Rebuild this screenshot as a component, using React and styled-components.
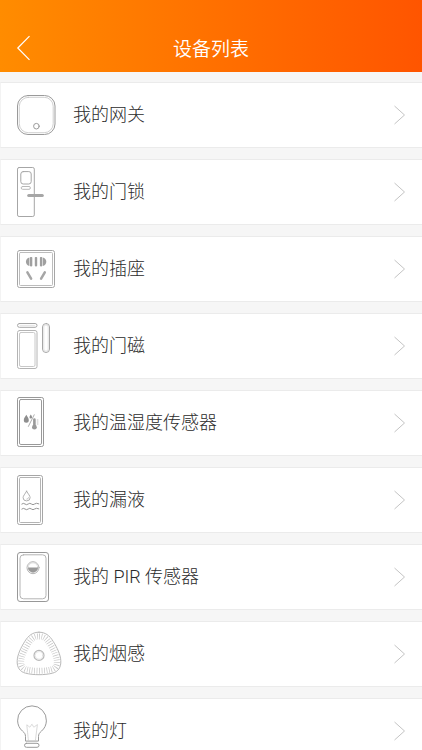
import React from "react";
import styled, { createGlobalStyle } from "styled-components";

const GlobalStyle = createGlobalStyle`
  * {
    box-sizing: border-box;
  }
  html {
    scrollbar-width: none;
  }
  body {
    margin: 0;
    background: #f6f6f6;
    font-family: "Noto Sans CJK SC", sans-serif;
    font-weight: 300;
  }
`;

const Header = styled.header`
  display: grid;
  grid-template-columns: 48px 1fr 48px;
  align-items: center;
  height: 72px;
  padding-top: 24px;
  background: linear-gradient(90deg, #ff8c00, #ff5500);
  color: #fff;
`;

const BackButton = styled.button`
  display: flex;
  padding: 0 0 0 16px;
  border: 0;
  background: none;
  color: inherit;
  cursor: pointer;
`;

const Title = styled.h1`
  margin: 0;
  font-size: 19px;
  line-height: 24px;
  font-weight: 350;
  text-align: center;
`;

const DeviceList = styled.ul`
  display: flex;
  flex-direction: column;
  gap: 11px;
  margin: 0;
  padding: 10px 0;
  list-style: none;
`;

const DeviceLink = styled.a`
  display: flex;
  align-items: center;
  height: 66px;
  padding: 0 16px 0 15px;
  border: 1px solid #ebebeb;
  border-right: 0;
  border-left-color: #f3f3f3;
  background: #fff;
  color: #2b2b2b;
  text-decoration: none;
`;

const DeviceName = styled.span`
  flex: 1;
  margin-left: 9px;
  font-family: Roboto, "Noto Sans CJK SC", sans-serif;
  font-size: 18px;
  line-height: 24px;
`;

const DeviceIcon = styled.svg`
  flex: none;
  overflow: visible;
  fill: none;
  stroke: ${({ $tone }) => $tone || "#a6a6a6"};
  stroke-width: 1;
  stroke-linecap: round;
  stroke-linejoin: round;
`;

const Arrow = styled.svg`
  flex: none;
  fill: none;
  stroke: ${({ $color }) => $color};
  stroke-width: ${({ $weight }) => $weight};
`;

const devices = [
  {
    id: "gateway",
    name: "我的网关",
    tone: "#9a9a9a",
    icon: (
      <>
        <rect x="1.5" y="5.5" width="37.5" height="39" rx="10.5" />
        <rect x="3.3" y="7.3" width="33.9" height="35.4" rx="9" stroke="#c4c4c4" strokeWidth="0.8" />
        <circle cx="20.4" cy="36.2" r="2.8" />
      </>
    ),
  },
  {
    id: "lock",
    name: "我的门锁",
    icon: (
      <>
        <rect x="1.5" y="0.5" width="16.8" height="49" rx="1.6" />
        <rect x="4.8" y="4.6" width="10.4" height="12.4" rx="2.4" />
        <rect x="5.2" y="19.5" width="9.2" height="2.8" rx="1.4" stroke="#b8b8b8" />
        <path d="M12.7 28.5H26.3" strokeWidth="3" />
      </>
    ),
  },
  {
    id: "socket",
    name: "我的插座",
    icon: (
      <>
        <rect x="1.5" y="6.5" width="37" height="37" rx="2" />
        <rect x="3.5" y="8.500" width="33" height="33" rx="1" stroke="#bcbcbc" />
        <g fill="#a0a0a0" stroke="none">
          <path d="M13.400 13.600v8.400c-2-.4-3.500-2.200-3.500-4.200s1.500-3.800 3.500-4.200z" />
          <rect x="13.900" y="13" width="2.400" height="9.400" rx="0.800" />
          <rect x="18.800" y="13" width="2.400" height="9.400" rx="0.800" />
          <rect x="23.900" y="13" width="2.400" height="9.400" rx="0.800" />
          <path d="M26.800 13.600v8.400c2-.4 3.500-2.200 3.500-4.200s-1.500-3.800-3.500-4.200z" />
        </g>
        <path d="M11.400 28.400l3.700 6.300M28.800 28.400l-3.700 6.300" strokeWidth="2.500" />
      </>
    ),
  },
  {
    id: "door-sensor",
    name: "我的门磁",
    icon: (
      <>
        <rect x="1.5" y="2.5" width="19.5" height="3.8" rx="1.9" />
        <path d="M4 4.4h14.5" stroke="#dedede" strokeWidth="0.8" />
        <rect x="1.5" y="9.5" width="19.5" height="38" rx="2" stroke="#b4b4b4" />
        <rect x="3.5" y="11.5" width="15.5" height="34" rx="1.5" stroke="#c8c8c8" />
        <rect x="26.5" y="2.5" width="7" height="29" rx="3.5" />
        <rect x="27.8" y="3.8" width="4.4" height="26.4" rx="2.2" stroke="#d6d6d6" strokeWidth="0.7" />
      </>
    ),
  },
  {
    id: "climate-sensor",
    name: "我的温湿度传感器",
    tone: "#999",
    icon: (
      <>
        <rect x="1.5" y="-0.5" width="26" height="49" rx="1.8" />
        <rect x="3.5" y="1.5" width="22" height="45" rx="1.4" />
        <path d="M10.3 16.8c1.2 2.1 2.5 3.6 2.5 5.4a2.5 2.5 0 0 1-5 0c0-1.8 1.3-3.3 2.5-5.4z" fill="#8e8e8e" stroke="none" />
        <path d="M14.8 16.4c.7 1.1 1.3 1.9 1.3 2.8a1.3 1.3 0 0 1-2.6 0c0-.9.6-1.7 1.3-2.8z" fill="#8e8e8e" stroke="none" />
        <path d="M18.2 16.8L12.4 28.4" strokeWidth="0.8" />
        <path d="M18.4 21.500v7" strokeWidth="2.600" />
        <circle cx="18.4" cy="29.2" r="2.4" fill="#999" stroke="none" />
        <path d="M21.2 22h.8M21.2 24h.8M21.2 26h.8" strokeWidth="0.6" />
      </>
    ),
  },
  {
    id: "leak-sensor",
    name: "我的漏液",
    icon: (
      <>
        <rect x="1.5" y="0.5" width="25" height="49" rx="2" />
        <rect x="3.5" y="2.5" width="21" height="45" rx="1" stroke="#b4b4b4" />
        <path d="M10.6 16.2c1.7 3 3.5 4.6 3.5 6.5a3.5 3.2 0 0 1-7 0c0-1.9 1.8-3.5 3.5-6.5z" strokeWidth="0.9" />
        <path d="M10.8 24.2a1.8 1.8 0 0 0 1.8-1.6" strokeWidth="0.6" />
        <path d="M5.800 29q1.600-1.400 3.200 0t3.200 0t3.200 0t3.200 0t4.200-.2" stroke="#969696" />
        <path d="M5.800 34q1.600-1.400 3.200 0t3.200 0t3.200 0t3.200 0t4.200-.2" stroke="#969696" />
      </>
    ),
  },
  {
    id: "pir-sensor",
    name: "我的 PIR 传感器",
    tone: "#989898",
    icon: (
      <>
        <rect x="1.5" y="0.5" width="31" height="49" rx="2.6" />
        <rect x="4" y="2.8" width="26" height="44" rx="3.4" stroke="#b4b4b4" />
        <circle cx="17" cy="15.7" r="6" stroke="#ababab" strokeWidth="0.9" />
        <circle cx="17" cy="15.7" r="4.9" stroke="#d0d0d0" strokeWidth="0.7" />
        <path d="M12 15.4h10a5 5 0 0 1-10 0z" fill="#999" stroke="none" />
      </>
    ),
  },
  {
    id: "smoke-sensor",
    name: "我的烟感",
    tone: "#b8b8b8",
    icon: (
      <>
        <path
          d="M23 7.400c5.200 0 7.800 2.500 10.800 7.400 3.700 6 6.400 11.400 7 16.800.5 5-1.400 7.800-5.500 8.900-7.200 1.800-17.400 1.800-24.600 0-4.100-1.100-6-3.900-5.500-8.900.6-5.400 3.300-10.800 7-16.800C15.200 9.900 17.800 7.400 23 7.400z"
          stroke="#c4c4c4"
          strokeWidth="6"
          strokeLinecap="butt"
          strokeDasharray="0.7 1.700"
        />
        <path d="M23 3.200c6.500 0 10.500 3.300 14.200 9.200 4 6.400 7.200 13 7.600 19.200.4 6.800-2.700 11.200-8.400 12.600-8 2-18.800 2-26.800 0-5.700-1.400-8.800-5.800-8.400-12.600.4-6.200 3.600-12.800 7.600-19.200C12.500 6.500 16.500 3.200 23 3.200z" />
        <circle cx="23" cy="26.400" r="5" strokeWidth="1.200" />
        <circle cx="23" cy="26.400" r="3.800" stroke="#d8d8d8" strokeWidth="0.600" />
      </>
    ),
  },
  {
    id: "light",
    name: "我的灯",
    tone: "#9a9a9a",
    icon: (
      <>
        <path d="M9.500 34.700v-4.200c0-2.400-1-3.700-3-5.400A14.400 14.400 0 1 1 25.500 25.100c-2 1.700-3 3-3 5.400v4.200z" />
        <rect x="8.500" y="37.300" width="14.500" height="4" rx="2" />
        <path d="M12.400 34.400l-1.600-15.600 3 2.400 2.200-3 1.800 3 3.600-2.600-2 15.800" stroke="#c8c8c8" strokeWidth="0.700" strokeDasharray="1.200 0.800" />
      </>
    ),
  },
];

function DeviceItem({ name, icon, tone }) {
  return (
    <li>
      <DeviceLink href="#">
        <DeviceIcon width="48" height="50" viewBox="0 0 48 50" $tone={tone} aria-hidden="true">
          {icon}
        </DeviceIcon>
        <DeviceName>{name}</DeviceName>
        <Arrow width="12" height="20" viewBox="0 0 12 20" $color="#c4c4c4" $weight={1} aria-hidden="true">
          <path d="M0.500 1L10.500 10L0.500 19" />
        </Arrow>
      </DeviceLink>
    </li>
  );
}

function App() {
  return (
    <>
      <GlobalStyle />
      <Header>
        <BackButton type="button" aria-label="返回">
          <Arrow width="14" height="26" viewBox="0 0 14 26" $color="#fff" $weight={1.2} aria-hidden="true">
            <path d="M13.500 1.200L1.800 13L13.500 24.800" />
          </Arrow>
        </BackButton>
        <Title>设备列表</Title>
      </Header>
      <main>
        <DeviceList>
          {devices.map((device) => (
            <DeviceItem key={device.id} name={device.name} icon={device.icon} tone={device.tone} />
          ))}
        </DeviceList>
      </main>
    </>
  );
}

export default App;
